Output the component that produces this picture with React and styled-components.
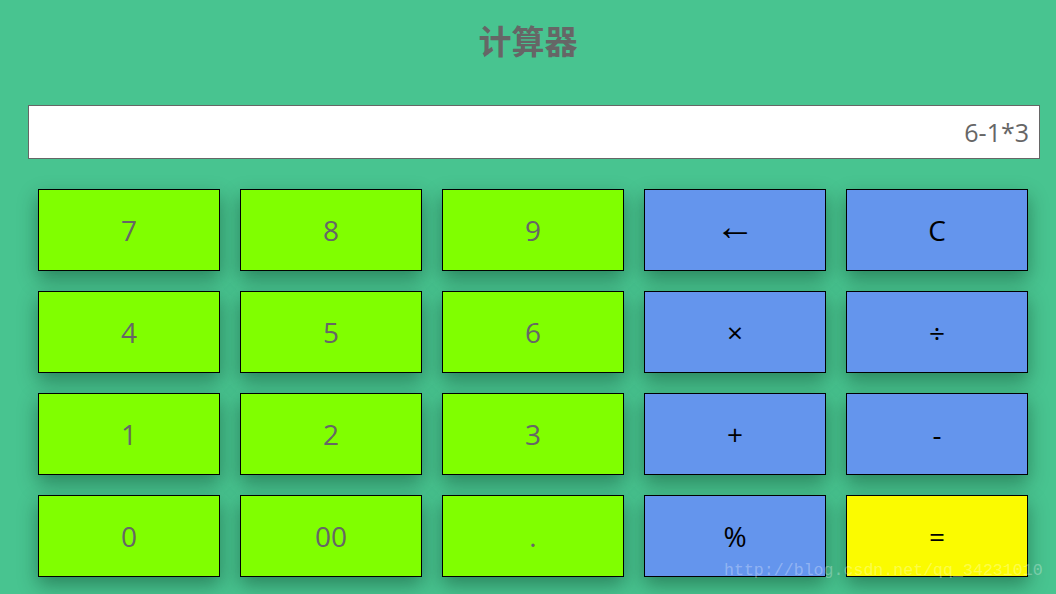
import React from 'react'
import styled, { createGlobalStyle } from 'styled-components'

const GlobalStyle = createGlobalStyle`
  html, body {
    margin: 0;
    padding: 0;
    background: #48c490;
    font-family: "Open Sans", "Noto Sans", "Noto Sans CJK SC", sans-serif;
  }
`

const Page = styled.div`
  position: relative;
  width: 1056px;
  height: 594px;
  overflow: hidden;
`

const Title = styled.h1`
  margin: 0;
  height: 86px;
  padding-top: 18px;
  box-sizing: border-box;
  text-align: center;
  font-family: "Noto Sans CJK SC", sans-serif;
  font-size: 33px;
  line-height: 44px;
  font-weight: 700;
  color: #666;
`

const Body = styled.div`
  padding: 0 16px 0 28px;
`

const Display = styled.div`
  margin-top: 19px;
  height: 54px;
  background: #fff;
  border: 1px solid #666;
  box-sizing: border-box;
  padding-right: 10px;
  display: flex;
  align-items: center;
  justify-content: flex-end;
  font-size: 25px;
  color: #666;
`

const Keys = styled.div`
  display: grid;
  grid-template-columns: repeat(5, 182px);
  grid-auto-rows: 82px;
  gap: 20px;
  margin: 30px 0 0 10px;
`

const colors = {
  num: '#80ff00',
  op: '#6495ed',
  eq: '#fbfb00'
}

const Key = styled.button`
  background: ${p => colors[p.kind]};
  border: 1px solid #000;
  box-shadow: 0 8px 18px rgba(0, 40, 20, 0.4);
  color: ${p => (p.kind === 'num' ? '#666' : '#000')};
  font-family: "Open Sans", "Noto Sans", sans-serif;
  font-size: ${p => (p.big ? '40px' : '28px')};
  line-height: 1;
  padding: ${p => (p.big ? '0 0 10px' : '0')};
  cursor: pointer;
`

const Watermark = styled.div`
  position: absolute;
  left: 724px;
  top: 561px;
  font-family: "Liberation Mono", monospace;
  font-size: 16.6px;
  color: rgba(255, 255, 255, 0.3);
  pointer-events: none;
`

const keys = [
  ['7', 'num'], ['8', 'num'], ['9', 'num'], ['←', 'op', true], ['C', 'op'],
  ['4', 'num'], ['5', 'num'], ['6', 'num'], ['×', 'op'], ['÷', 'op'],
  ['1', 'num'], ['2', 'num'], ['3', 'num'], ['+', 'op'], ['-', 'op'],
  ['0', 'num'], ['00', 'num'], ['.', 'num'], ['%', 'op'], ['=', 'eq']
]

export default function App() {
  return (
    <Page>
      <GlobalStyle />
      <Title>计算器</Title>
      <Body>
        <Display>6-1*3</Display>
        <Keys>
          {keys.map(([label, kind, big]) => (
            <Key key={label} kind={kind} big={big}>
              {label}
            </Key>
          ))}
        </Keys>
      </Body>
      <Watermark>http://blog.csdn.net/qq_34231010</Watermark>
    </Page>
  )
}
